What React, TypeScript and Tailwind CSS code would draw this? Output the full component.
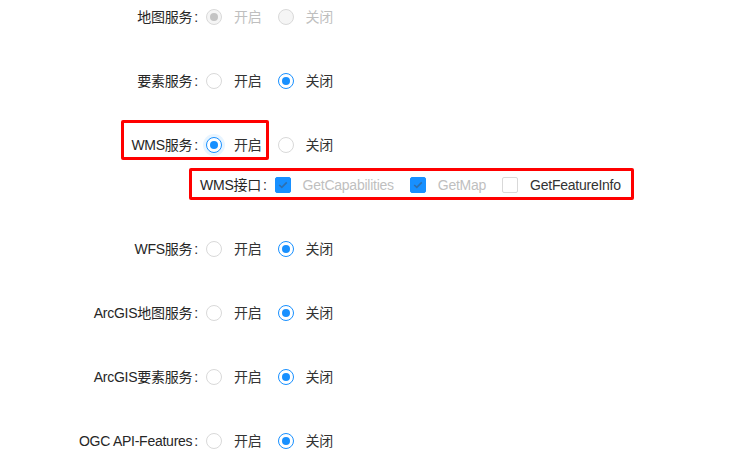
import React from "react";

const rows: { label: string; on: boolean; disabled?: boolean }[] = [
  { label: "地图服务", on: true, disabled: true },
  { label: "要素服务", on: false },
  { label: "WMS服务", on: true },
];

const rowsAfter: { label: string; on: boolean }[] = [
  { label: "WFS服务", on: false },
  { label: "ArcGIS地图服务", on: false },
  { label: "ArcGIS要素服务", on: false },
  { label: "OGC API-Features", on: false },
];

function Radio({ checked, disabled, focus }: { checked: boolean; disabled?: boolean; focus?: boolean }) {
  if (disabled) {
    return (
      <span className="w-4 h-4 rounded-full border border-[#d9d9d9] bg-[#f5f5f5] flex items-center justify-center shrink-0">
        {checked && <span className="w-2 h-2 rounded-full bg-[#c4c4c4]" />}
      </span>
    );
  }
  return (
    <span
      className={
        "w-4 h-4 rounded-full border bg-white flex items-center justify-center shrink-0 " +
        (checked ? "border-[#1890ff] " : "border-[#d9d9d9] ") +
        (focus ? "shadow-[0_0_0_3px_rgba(24,144,255,0.1)]" : "")
      }
    >
      {checked && <span className="w-2 h-2 rounded-full bg-[#1890ff]" />}
    </span>
  );
}

function Checkbox({ checked }: { checked: boolean }) {
  if (checked) {
    return (
      <span className="w-4 h-4 rounded-[2px] bg-[#1890ff] border border-[#1890ff] flex items-center justify-center shrink-0">
        <svg width="10" height="8" viewBox="0 0 10 8">
          <path d="M1.2 4 L3.8 6.4 L8.8 1.4" fill="none" stroke="#2f6fae" strokeWidth="1.6" />
        </svg>
      </span>
    );
  }
  return <span className="w-4 h-4 rounded-[2px] bg-white border border-[#d9d9d9] shrink-0" />;
}

function Row({ label, on, disabled, focus }: { label: string; on: boolean; disabled?: boolean; focus?: boolean }) {
  const txt = disabled ? "text-[#bfbfbf]" : "text-[#333]";
  return (
    <div className="flex items-center h-8">
      <div className="w-[198px] text-right text-[#262626] whitespace-nowrap">
        {label}
        <span className="ml-[2px]">:</span>
      </div>
      <div className="flex items-center ml-2">
        <Radio checked={on} disabled={disabled} focus={focus} />
        <span className={"ml-3 mr-4 " + txt}>开启</span>
        <Radio checked={!on} disabled={disabled} />
        <span className={"ml-3 " + txt}>关闭</span>
      </div>
    </div>
  );
}

export default function App() {
  return (
    <div
      className="relative w-[746px] h-[472px] bg-white overflow-hidden text-[14px] tracking-[-0.25px] pt-[1px]"
      style={{ fontFamily: '"Liberation Sans", "Noto Sans CJK SC", sans-serif' }}
    >
      <div className="flex flex-col gap-8">
        {rows.map((r) => (
          <Row key={r.label} label={r.label} on={r.on} disabled={r.disabled} focus={r.label === "WMS服务"} />
        ))}
      </div>

      <div className="flex items-center h-8 mt-2 pl-[200px]">
        <span className="text-[#262626]">
          WMS接口<span className="ml-[2px]">:</span>
        </span>
        <span className="ml-2 flex items-center">
          <Checkbox checked />
          <span className="ml-3 mr-4 text-[#bfbfbf]">GetCapabilities</span>
          <Checkbox checked />
          <span className="ml-3 mr-4 text-[#bfbfbf]">GetMap</span>
          <Checkbox checked={false} />
          <span className="ml-3 text-[#333]">GetFeatureInfo</span>
        </span>
      </div>

      <div className="flex flex-col gap-8 mt-8">
        {rowsAfter.map((r) => (
          <Row key={r.label} label={r.label} on={r.on} />
        ))}
      </div>

      {/* annotation boxes */}
      <div className="absolute left-[121px] top-[120px] w-[148px] h-[40px] border-[3px] border-[#ff0000] rounded-[2px]" />
      <div className="absolute left-[189px] top-[168px] w-[445px] h-[32px] border-[3px] border-[#ff0000] rounded-[2px]" />
    </div>
  );
}
